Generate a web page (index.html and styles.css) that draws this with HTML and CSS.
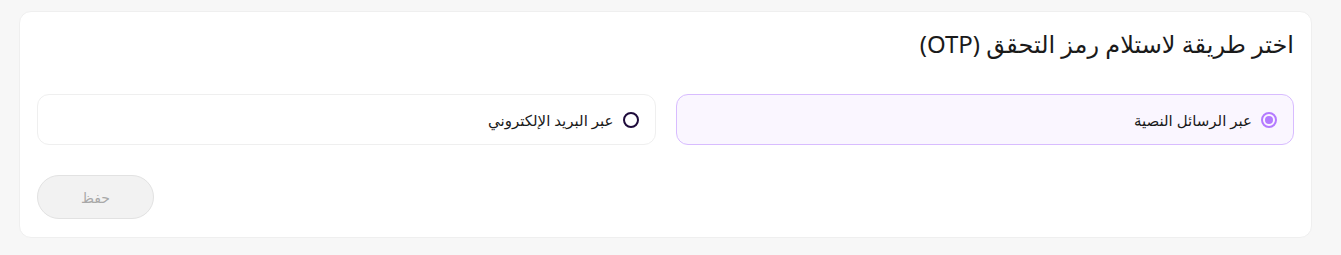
FILE: index.html
```html
<!DOCTYPE html>
<html lang="ar" dir="rtl">
<head>
    <meta charset="utf-8">
    <title>OTP</title>
    <link rel="stylesheet" href="styles.css">
</head>
<body>
<div class="card">
    <h2 class="title">اختر طريقة لاستلام رمز التحقق (OTP)</h2>
    <div class="options">
        <label class="option selected">
            <span class="radio"></span>
            <span class="label-text">عبر الرسائل النصية</span>
        </label>
        <label class="option">
            <span class="radio"></span>
            <span class="label-text">عبر البريد الإلكتروني</span>
        </label>
    </div>
    <div class="actions">
        <button class="save" disabled>حفظ</button>
    </div>
</div>
</body>
</html>
```

FILE: styles.css
```css
body {
    margin: 0;
    padding: 11px 29px 17px 19px;
    background: #f7f7f7;
    font-family: "Noto Sans", "DejaVu Sans", sans-serif;
    color: #1a1a1a;
}
.card {
    background: #fff;
    border: 1px solid #efefef;
    border-radius: 12px;
    padding: 17px 17px 18px 17px;
}
.title {
    margin: 0;
    font-size: 24px;
    font-weight: 400;
    line-height: 30px;
    color: #1a1a1a;
}
.options {
    display: flex;
    gap: 20px;
    margin-top: 35px;
}
.option {
    flex: 1;
    height: 51px;
    box-sizing: border-box;
    display: flex;
    align-items: center;
    gap: 9px;
    padding: 0 16px;
    border: 1px solid #efefef;
    border-radius: 12px;
    background: #fff;
    font-size: 15px;
}
.option.selected {
    background: #faf6ff;
    border-color: #d8bcff;
}
.radio {
    width: 16px;
    height: 16px;
    box-sizing: border-box;
    border: 2px solid #1e0b3b;
    border-radius: 50%;
    position: relative;
}
.option.selected .radio {
    border-color: #b47aff;
}
.option.selected .radio::after {
    content: "";
    position: absolute;
    top: 2px;
    left: 2px;
    width: 8px;
    height: 8px;
    border-radius: 50%;
    background: #b47aff;
}
.actions {
    display: flex;
    justify-content: flex-end;
    margin-top: 30px;
}
.save {
    width: 117px;
    height: 44px;
    border-radius: 22px;
    border: 1px solid #e2e2e2;
    background: #f2f2f2;
    color: #a8a8a8;
    font-family: inherit;
    font-size: 14px;
}
```
